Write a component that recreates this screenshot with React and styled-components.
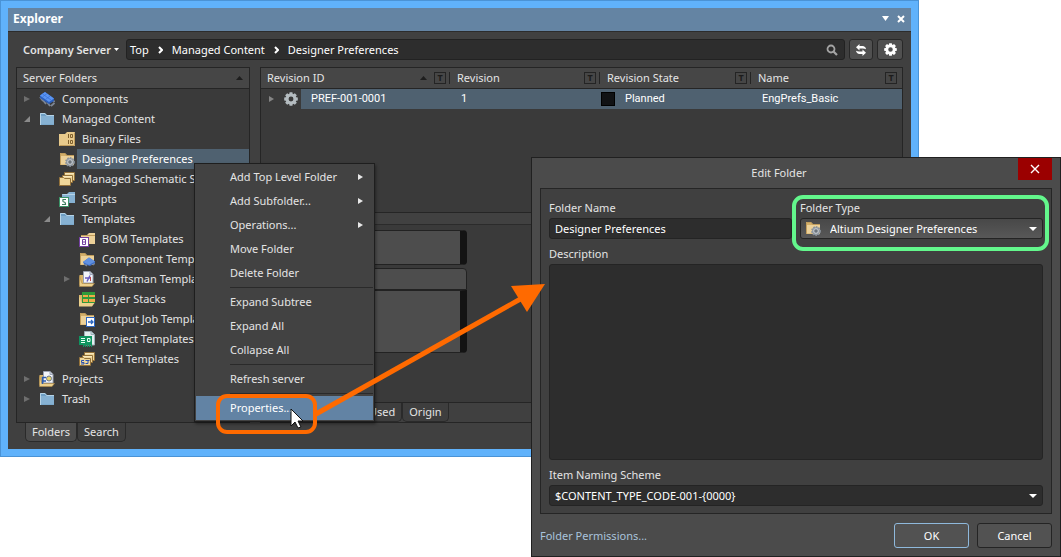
import React from 'react'
import styled, { createGlobalStyle, css } from 'styled-components'

const GlobalStyle = createGlobalStyle`
    *, *::before {
        box-sizing: border-box;
    }
    body {
        margin: 0;
        background: #fff;
        color: #e4e4e4;
        font: 11px/20px "Noto Sans", "Open Sans", sans-serif;
    }
    button, input, select, textarea {
        font: inherit;
        color: inherit;
        margin: 0;
    }
`

const Stage = styled.main`
    position: relative;
    min-height: 557px;
`

/* explorer window */
const Window = styled.section`
    margin-right: 142px;
    border: 8px solid #60b2fb;
    background: #404040;
    outline: 1px solid #4a93d6;
    outline-offset: -1px;
`
const TitleBar = styled.header`
    display: flex;
    align-items: center;
    height: 24px;
    padding: 0 6px 2px 5px;
    background: #6484a3;
    border-bottom: 1px solid #2c2c2c;
    color: #fff;
`
const Heading = styled.h1`
    flex: 1;
    margin: 0;
    font-size: 12px;
    font-weight: 700;
`
const BarButton = styled.button`
    display: flex;
    padding: 0;
    margin-left: 8px;
    border: 0;
    background: none;
`
const Toolbar = styled.div`
    display: flex;
    align-items: center;
    gap: 4px;
    padding: 7px 8px;
`
const ServerButton = styled.button`
    display: flex;
    align-items: center;
    justify-content: flex-end;
    gap: 3px;
    width: 106px;
    padding: 0 3px 0 0;
    border: 0;
    background: none;
    font-weight: 600;
    white-space: nowrap;
`
const Crumbs = styled.nav`
    display: flex;
    flex: 1;
    align-items: center;
    gap: 9px;
    height: 21px;
    padding: 0 6px 0 3px;
    border: 1px solid #222;
    border-radius: 3px;
    background: #2d2d2d;
    color: #fff;
    svg:last-child {
        margin-left: auto;
    }
`
const Crumb = styled.a`
    color: inherit;
    text-decoration: none;
`
const ToolButton = styled.button`
    display: flex;
    align-items: center;
    justify-content: center;
    width: ${p => p.$wide ? 26 : 24}px;
    height: 21px;
    padding: 0;
    border: 1px solid #282828;
    border-radius: 3px;
    background: #505050;
`
const Columns = styled.div`
    display: grid;
    grid-template-columns: 234px 1fr;
    gap: 10px;
    padding: 0 8px 7px;
`
const Panel = styled.div`
    height: 356px;
    border: 1px solid #252525;
    background: #3a3a3a;
`
const PanelHead = styled.div`
    display: flex;
    align-items: center;
    justify-content: space-between;
    height: 21px;
    padding: 0 6px;
    border-bottom: 1px solid #252525;
    background: #464646;
`
const TabRow = styled.div`
    display: flex;
    padding-left: 9px;
`
const Tab = styled.button`
    height: 19px;
    padding: 0 6px;
    border: 1px solid #2a2a2a;
    border-top: 0;
    border-radius: 0 0 5px 5px;
    background: ${p => p.$active ? '#4c4c4c' : '#3e3e3e'};
    line-height: 18px;
`
const Tree = styled.ul`
    margin: 0;
    padding: 0;
    list-style: none;
`
const TreeRow = styled.li`
    display: grid;
    grid-template-columns: 20px 20px 1fr;
    align-items: center;
    height: 20px;
    padding-left: ${p => p.$level * 20}px;
    svg {
        justify-self: center;
    }
`
const TreeLabel = styled.span`
    grid-column: 3;
    height: 20px;
    padding-left: 5px;
    overflow: hidden;
    white-space: nowrap;
    ${p => p.$selected && css`
        background: #4f6170;
        color: #fff;
    `}
`

/* revision list */
const Revisions = styled.div`
    height: 144px;
`
const Table = styled.table`
    width: 100%;
    table-layout: fixed;
    border-spacing: 0;
`
const Th = styled.th`
    width: ${p => p.$width || 'auto'};
    height: 21px;
    padding: 0 ${p => p.$last ? 5 : 1}px 0 6px;
    border-bottom: 1px solid #252525;
    background: #464646;
    font-weight: 400;
    text-align: left;
`
const ThInner = styled.div`
    display: flex;
    align-items: center;
    gap: 7px;
    height: 20px;
    span {
        flex: 1;
    }
`
const FilterMark = styled.button`
    width: 12px;
    height: 12px;
    padding: 0;
    border: 1px solid #242424;
    background: none;
    color: #1c1c1c;
    font-size: 9px;
    font-weight: 700;
    line-height: 10px;
`
const Divider = styled.i`
    width: 1px;
    height: 12px;
    margin-left: -4px;
    background: #242424;
`
const Td = styled.td`
    height: 20px;
    padding: 0 0 0 ${p => p.$pad || 0}px;
    background: #4f6170;
    color: #fff;
    font: 11px/20px Roboto, sans-serif;
`
const RevCell = styled.div`
    display: grid;
    grid-template-columns: 20px 20px 1fr;
    align-items: center;
    justify-items: center;
    background: #3a3a3a;
    span {
        justify-self: stretch;
        padding-left: 10px;
        background: #4f6170;
    }
`
const StateCell = styled.div`
    display: flex;
    align-items: center;
    gap: 10px;
    &::before {
        content: '';
        width: 14px;
        height: 14px;
        border: 1px solid #000;
        background: #111214;
    }
`
const Preview = styled.div`
    height: 190px;
    padding: 11px 4px 0;
    border-top: 1px solid #252525;
    background: linear-gradient(#414141 11px, #3a3a3a 11px);
`
const PreviewLine = styled.div`
    border-top: 1px solid #2b2b2b;
    margin-bottom: 5px;
`
const Card = styled.div`
    width: 202px;
    height: ${p => p.$height}px;
    margin-bottom: ${p => p.$gap || 0}px;
    border: 1px solid #222;
    border-right: ${p => p.$flat ? '1px' : '7px'} solid ${p => p.$flat ? '#222' : '#131313'};
    border-radius: ${p => p.$radius || '4px'};
    background: #4d4d4d;
`
const PreviewTabs = styled(TabRow)`
    height: 20px;
    padding-left: 101px;
    border-top: 1px solid #252525;
    background: #404040;
`

/* context menu */
const Menu = styled.div`
    position: absolute;
    top: 163px;
    left: 194px;
    width: 181px;
    padding: 1px;
    border: 1px solid #1e1e1e;
    background: #424242;
    box-shadow: 1px 2px 3px rgba(0, 0, 0, .4);
`
const MenuItem = styled.button`
    display: flex;
    align-items: center;
    justify-content: space-between;
    width: 100%;
    height: 24px;
    padding: 0 10px 0 34px;
    border: 0;
    background: ${p => p.$active ? '#6283a4' : 'none'};
    color: ${p => p.$active ? '#fff' : '#e4e4e4'};
`
const MenuLine = styled.hr`
    height: 1px;
    margin: 2px 0 2px 34px;
    border: 0;
    background: #2a2a2a;
`

/* dialog */
const Dialog = styled.section`
    position: absolute;
    top: 157px;
    left: 531px;
    right: 0;
    padding: 0 8px 8px;
    border: 1px solid #202020;
    background: #4b4b4b;
`
const DialogTitle = styled.header`
    display: flex;
    height: 30px;
    h2 {
        flex: 1;
        margin: 0;
        font-size: 11px;
        font-weight: 400;
        line-height: 30px;
        text-align: center;
    }
`
const CloseButton = styled.button`
    display: flex;
    align-items: center;
    justify-content: center;
    width: 34px;
    height: 22px;
    padding: 0;
    border: 0;
    background: #9b0000;
    color: #fff;
`
const Form = styled.form`
    display: grid;
    grid-template-columns: 1fr 1fr;
    column-gap: 8px;
    row-gap: 5px;
    padding: 9px 8px 7px;
    border: 1px solid #252525;
    background: #404040;
`
const Field = styled.div`
    display: flex;
    flex-direction: column;
    grid-column: ${p => p.$wide ? '1 / -1' : 'auto'};
    label {
        height: 20px;
    }
`
const box = css`
    width: 100%;
    height: 21px;
    padding: 0 5px;
    border: 1px solid #242424;
    border-radius: 3px;
    background: #2d2d2d;
    color: #fff;
    outline: 0;
`
const Input = styled.input`
    ${box}
`
const TextArea = styled.textarea`
    ${box}
    height: 196px;
    resize: none;
`
const SelectBox = styled.div`
    position: relative;
    display: flex;
    svg {
        position: absolute;
        pointer-events: none;
    }
    svg:last-child {
        top: 9px;
        right: 6px;
    }
    svg:not(:last-child) {
        top: 2px;
        left: 5px;
    }
`
const Select = styled.select`
    ${box}
    appearance: none;
    ${p => p.$icon && css`
        padding-left: 29px;
        background: linear-gradient(#484848, #585858);
    `}
`
const Footer = styled.footer`
    display: flex;
    align-items: center;
    gap: 8px;
    padding-top: 9px;
`
const Permissions = styled.a`
    flex: 1;
    color: #a9c3dc;
    text-decoration: none;
`
const DialogButton = styled.button`
    width: 75px;
    height: 25px;
    border: 1px solid ${p => p.$primary ? '#8fb9dc' : '#242424'};
    border-radius: 3px;
    background: #525252;
    color: #fff;
`

/* callouts drawn over both windows */
const Callout = styled.div`
    position: absolute;
    border: 4px solid ${p => p.$color};
    border-radius: 11px;
    pointer-events: none;
`
const OrangeCallout = styled(Callout)`
    top: 394px;
    left: 216px;
    width: 101px;
    height: 40px;
`
const GreenCallout = styled(Callout)`
    top: 195px;
    left: 792px;
    right: 12px;
    height: 56px;
`
const Overlay = styled.svg`
    position: absolute;
    top: 0;
    left: 0;
    pointer-events: none;
`

const Caret = ({ w = 7, h = 4, up, color = '#fff' }) => (
  <svg width={w} height={h} viewBox="0 0 8 4" preserveAspectRatio="none">
    <path d={up ? 'M0 4L4 0L8 4Z' : 'M0 0H8L4 4Z'} fill={color} />
  </svg>
)

const Twisty = ({ open }) => (
  <svg width="8" height="8" viewBox="0 0 8 8">
    <path d={open ? 'M7 1V7H1Z' : 'M1 1L7 4L1 7Z'} fill={open ? '#8a8a8a' : '#6e6e6e'} />
  </svg>
)

const Right = ({ color = '#e8e8e8' }) => (
  <svg width="5" height="6" viewBox="0 0 5 6"><path d="M0 0L5 3L0 6Z" fill={color} /></svg>
)

const Chevron = () => (
  <svg width="5" height="8" viewBox="0 0 5 8"><path d="M1 1L4 4L1 7" fill="none" stroke="#fff" strokeWidth="2" /></svg>
)

const teeth = [0, 45, 90, 135, 180, 225, 270, 315]

const Gear = ({ size = 14, color = '#fff' }) => (
  <svg width={size} height={size} viewBox="0 0 14 14">
    {teeth.map(a => (
      <path key={a} d="M5 3L5.600 0.200H8.400L9 3Z" fill={color} transform={`rotate(${a} 7 7)`} />
    ))}
    <circle cx="7" cy="7" r="3.900" fill="none" stroke={color} strokeWidth="2.900" />
  </svg>
)

const Folder = ({ fill = '#ecd199', edge = '#c09c5c', back = '#d2ae68' }) => (
  <g>
    <path d="M1 2H6L8 4H15V14H1Z" fill={back} />
    <path d="M2 5H15V13.500H2Z" fill={fill} />
    <path d="M1.500 14V2.500H6L7.500 4.500H15" fill="none" stroke={edge} />
  </g>
)

const BlueFolder = () => <Folder fill="#86b1d2" back="#6f9fc4" edge="#b6d3e6" />

const Stack = () => (
  <g stroke="#94723a" fill="#efd79a">
    <path d="M5.500 1.500H15.500V9.500H5.500Z" />
    <path d="M3.500 4.500H13.500V11.500H3.500Z" />
    <path d="M0.500 6.500H4.500L5.500 7.500H11.500V14.500H0.500Z" />
    <path d="M6 2.500H15M4 5.500H13" stroke="#f8e8bc" />
  </g>
)

const DocFolder = () => (
  <g>
    <path d="M0.500 4H5V14H0.500Z" fill="#d9b568" />
    <path d="M4.500 0.500H11L14 3.500V12H4.500Z" fill="#f4f6fa" stroke="#9ba3b3" />
    <path d="M11 0.500V3.500H14" fill="#c8d0de" stroke="#9ba3b3" />
    <path d="M0.500 5L3 12.500H15.500L13 15.500H0.500Z" fill="#ecd08c" stroke="#b08c4a" strokeWidth="0.600" />
  </g>
)

const drawings = {
  chip: (
    <g>
      <path d="M1 6L4 10M3 8L7 13M12 15L15.500 12M8 11L11 15M14 9L15.500 11" stroke="#7d8694" strokeWidth="1.800" />
      <path d="M1 4.500L6 1L15 7.500V10L10 13L1 7Z" fill="#2b5fbd" />
      <path d="M6 1L15 7.500L10 11L1 4.500Z" fill="#5b95f2" />
      <path d="M3.500 3L12 9M8 2.500L3.500 6M11 5L6.500 8.500" stroke="#3a72d8" strokeWidth="0.800" />
    </g>
  ),
  blue: <BlueFolder />,
  binary: (
    <g>
      <path d="M0 3H6L8 1H16V15H0Z" fill="#e8ca8c" />
      <path d="M0.500 14.500H15.500V1.500" fill="none" stroke="#c09c5c" />
      <path d="M9.500 3V7M9.500 9V13" stroke="#80602c" />
      <path d="M11.500 3.500H13.500V6.500H11.500ZM11.500 9.500H13.500V12.500H11.500Z" fill="none" stroke="#80602c" />
    </g>
  ),
  prefs: (
    <g>
      <Folder />
      <circle cx="11" cy="11" r="4" fill="#9aa2aa" stroke="#8b939b" strokeDasharray="1.600 1" strokeWidth="1.800" />
      <circle cx="11" cy="11" r="2.300" fill="#6c747c" stroke="#c9ced3" />
    </g>
  ),
  stack: <Stack />,
  script: (
    <g>
      <path d="M3 3H8L10 1H16V12H3Z" fill="#86b1d2" />
      <path d="M3.500 3.500H16" stroke="#b6d3e6" />
      <rect x="0.500" y="6.500" width="9" height="9" fill="#fff" stroke="#3c9468" />
      <path d="M7 8.500H4Q3.500 11 5 11Q6.500 11 6.500 13.500H3" fill="none" stroke="#3c7c5c" strokeWidth="1.200" />
    </g>
  ),
  bom: (
    <g>
      <path d="M2 4H8L10 2H16V13H2Z" fill="#ecd199" />
      <path d="M2 4.500H16" stroke="#c09c5c" />
      <rect x="0.500" y="6.500" width="9" height="9" fill="#fff" stroke="#7440a0" />
      <path d="M3.500 8.500H6.500V13.500H3.500ZM3.500 11H6.500" fill="none" stroke="#7440a0" />
    </g>
  ),
  component: (
    <g>
      <Folder />
      <path d="M5 13L8 15M14 14L16 12" stroke="#7d8694" strokeWidth="1.500" />
      <path d="M4 11L10 6.500L16 10.500V12L11 15L5 13Z" fill="#3c6cc4" />
      <path d="M4 11L10 6.500L16 10.500L10 14Z" fill="#6090e0" />
    </g>
  ),
  draft: (
    <g>
      <DocFolder />
      <path d="M6 7H12M11 4.500L8 10.500" stroke="#6a5cc0" strokeWidth="1.400" />
      <path d="M11.500 6V10" stroke="#c04848" />
    </g>
  ),
  layers: (
    <g>
      <path d="M0 4H4V15H0Z" fill="#d9b568" />
      <rect x="3" y="1" width="13" height="11" fill="#2f9a3a" />
      <path d="M4 4H9V6H4ZM10 4H16V6H10ZM4 8H9V11H4ZM10 8H16V11H10Z" fill="#f0aa48" />
      <path d="M0 5L3 12H15.500L13 15.500H0Z" fill="#ecd08c" />
    </g>
  ),
  output: (
    <g>
      <Folder />
      <rect x="7.500" y="6.500" width="8" height="9" fill="#fff" stroke="#2c66c0" />
      <path d="M9 11H14M12 9L14 11L12 13" fill="none" stroke="#2c66c0" strokeWidth="1.300" />
    </g>
  ),
  project: (
    <g>
      <path d="M5.500 0.500H12L15.500 3.500V14H5.500Z" fill="#e4eef0" stroke="#9cb0b8" />
      <path d="M12 0.500V3.500H15" fill="#c8d8de" stroke="#9cb0b8" />
      <rect y="5" width="13" height="9" fill="#0f9460" />
      <path d="M2 7.500H6M2 9.500H6M2 11.500H6" stroke="#e8fff4" />
      <path d="M8.500 7.500H11V10.500H8.500Z" fill="none" stroke="#e8fff4" />
      <path d="M4 15H13" stroke="#0f9460" strokeWidth="2" strokeDasharray="1 1" />
    </g>
  ),
  sch: (
    <g>
      <Stack />
      <path d="M5 9.500H2.500V11.500H5V13H2M6.500 9.500H10.500M6.500 12.500H9V10" fill="none" stroke="#2850b0" />
    </g>
  ),
  projects: (
    <g>
      <DocFolder />
      <path d="M3.500 13V6.500H7M3.500 10H7" fill="none" stroke="#2c5cae" strokeWidth="1.500" />
      <circle cx="10" cy="7.500" r="2.500" fill="#e8d46c" stroke="#6c7890" />
    </g>
  ),
}

const Icon = ({ name }) => (
  <svg width="16" height="16" viewBox="0 0 16 16">{drawings[name]}</svg>
)

const tree = [
  { level: 0, icon: 'chip', label: 'Components', twisty: 'closed' },
  { level: 0, icon: 'blue', label: 'Managed Content', twisty: 'open' },
  { level: 1, icon: 'binary', label: 'Binary Files' },
  { level: 1, icon: 'prefs', label: 'Designer Preferences', selected: true },
  { level: 1, icon: 'stack', label: 'Managed Schematic Sheets' },
  { level: 1, icon: 'script', label: 'Scripts' },
  { level: 1, icon: 'blue', label: 'Templates', twisty: 'open' },
  { level: 2, icon: 'bom', label: 'BOM Templates' },
  { level: 2, icon: 'component', label: 'Component Templates' },
  { level: 2, icon: 'draft', label: 'Draftsman Templates', twisty: 'closed' },
  { level: 2, icon: 'layers', label: 'Layer Stacks' },
  { level: 2, icon: 'output', label: 'Output Job Templates' },
  { level: 2, icon: 'project', label: 'Project Templates' },
  { level: 2, icon: 'sch', label: 'SCH Templates' },
  { level: 0, icon: 'projects', label: 'Projects', twisty: 'closed' },
  { level: 0, icon: 'blue', label: 'Trash', twisty: 'closed' },
]

const columns = [
  { label: 'Revision ID', width: '190px', sorted: true },
  { label: 'Revision', width: '150px' },
  { label: 'Revision State', width: '151px' },
  { label: 'Name', last: true },
]

const menu = [
  { label: 'Add Top Level Folder', sub: true },
  { label: 'Add Subfolder...', sub: true },
  { label: 'Operations...', sub: true },
  { label: 'Move Folder' },
  { label: 'Delete Folder' },
  null,
  { label: 'Expand Subtree' },
  { label: 'Expand All' },
  { label: 'Collapse All' },
  null,
  { label: 'Refresh server' },
  null,
  { label: 'Properties...', active: true },
]

const Explorer = () => (
  <Window>
    <TitleBar>
      <Heading>Explorer</Heading>
      <BarButton aria-label="Window menu"><Caret h={5} /></BarButton>
      <BarButton aria-label="Close panel">
        <svg width="8" height="8" viewBox="0 0 8 8"><path d="M1 1L7 7M7 1L1 7" stroke="#fff" strokeWidth="2" /></svg>
      </BarButton>
    </TitleBar>
    <Toolbar>
      <ServerButton>Company Server <Caret w={5} h={3} /></ServerButton>
      <Crumbs>
        <Crumb href="#top">Top</Crumb>
        <Chevron />
        <Crumb href="#content">Managed Content</Crumb>
        <Chevron />
        <Crumb href="#prefs">Designer Preferences</Crumb>
        <svg width="12" height="12" viewBox="0 0 12 12">
          <circle cx="5" cy="5" r="3.500" fill="none" stroke="#a4a4a4" strokeWidth="1.800" />
          <path d="M7.500 7.500L11 11" stroke="#a4a4a4" strokeWidth="2.200" />
        </svg>
      </Crumbs>
      <ToolButton aria-label="Refresh">
        <svg width="12" height="12" viewBox="0 0 12 12">
          <path d="M1 3.200L4.500 0V2H7.500Q10.500 2.200 11 5.200Q9.500 4.300 7.500 4.400H4.500V6.400Z" fill="#fff" />
          <path d="M11 8.800L7.500 5.600V7.600H4.500Q2.500 7.700 1 6.800Q1.500 9.800 4.500 10H7.500V12Z" fill="#fff" />
        </svg>
      </ToolButton>
      <ToolButton $wide aria-label="Settings"><Gear size={13} /></ToolButton>
    </Toolbar>
    <Columns>
      <div>
        <Panel>
          <PanelHead>Server Folders <Caret up color="#1e1e1e" /></PanelHead>
          <Tree>
            {tree.map(n => (
              <TreeRow key={n.label} $level={n.level}>
                {n.twisty ? <Twisty open={n.twisty === 'open'} /> : <i />}
                <Icon name={n.icon} />
                <TreeLabel $selected={n.selected}>{n.label}</TreeLabel>
              </TreeRow>
            ))}
          </Tree>
        </Panel>
        <TabRow>
          <Tab $active>Folders</Tab>
          <Tab>Search</Tab>
        </TabRow>
      </div>
      <Panel>
        <Revisions>
          <Table>
            <thead>
              <tr>
                {columns.map(c => (
                  <Th key={c.label} $width={c.width} $last={c.last}>
                    <ThInner>
                      <span>{c.label}</span>
                      {c.sorted && <Caret up color="#1e1e1e" />}
                      <FilterMark aria-label={'Filter ' + c.label}>T</FilterMark>
                      {!c.last && <Divider />}
                    </ThInner>
                  </Th>
                ))}
              </tr>
            </thead>
            <tbody>
              <tr>
                <Td>
                  <RevCell>
                    <Right color="#858585" />
                    <Gear color="#b4bcc0" />
                    <span>PREF-001-0001</span>
                  </RevCell>
                </Td>
                <Td $pad={10}>1</Td>
                <Td><StateCell>Planned</StateCell></Td>
                <Td $pad={10}>EngPrefs_Basic</Td>
              </tr>
            </tbody>
          </Table>
        </Revisions>
        <Preview>
          <PreviewLine />
          <Card $height={35} $gap={3} />
          <Card $height={22} $flat $radius="4px 4px 0 0" />
          <Card $height={63} $radius="0 0 4px 4px" />
        </Preview>
        <PreviewTabs>
          <Tab>Used</Tab>
          <Tab>Origin</Tab>
        </PreviewTabs>
      </Panel>
    </Columns>
  </Window>
)

const ContextMenu = () => (
  <Menu>
    {menu.map((m, i) => m ? (
      <MenuItem key={m.label} $active={m.active}>
        {m.label}
        {m.sub && <Right />}
      </MenuItem>
    ) : <MenuLine key={i} />)}
  </Menu>
)

const EditFolder = () => (
  <Dialog>
    <DialogTitle>
      <h2>Edit Folder</h2>
      <CloseButton aria-label="Close">
        <svg width="10" height="10" viewBox="0 0 10 10"><path d="M1 1L9 9M9 1L1 9" stroke="#fff" strokeWidth="1.400" /></svg>
      </CloseButton>
    </DialogTitle>
    <Form>
      <Field>
        <label htmlFor="name">Folder Name</label>
        <Input id="name" defaultValue="Designer Preferences" />
      </Field>
      <Field>
        <label htmlFor="type">Folder Type</label>
        <SelectBox>
          <Select id="type" $icon><option>Altium Designer Preferences</option></Select>
          <Icon name="prefs" />
          <Caret w={8} />
        </SelectBox>
      </Field>
      <Field $wide>
        <label htmlFor="desc">Description</label>
        <TextArea id="desc" />
      </Field>
      <Field $wide>
        <label htmlFor="scheme">Item Naming Scheme</label>
        <SelectBox>
          <Select id="scheme"><option>{'$CONTENT_TYPE_CODE-001-{0000}'}</option></Select>
          <Caret w={8} />
        </SelectBox>
      </Field>
    </Form>
    <Footer>
      <Permissions href="#permissions">Folder Permissions...</Permissions>
      <DialogButton $primary>OK</DialogButton>
      <DialogButton>Cancel</DialogButton>
    </Footer>
  </Dialog>
)

const App = () => {
  return (
    <Stage>
      <GlobalStyle />
      <Explorer />
      <ContextMenu />
      <EditFolder />
      <OrangeCallout $color="#ff6a00" />
      <GreenCallout $color="#63f78c" />
      <Overlay width="560" height="440" viewBox="0 0 560 440">
        <path d="M316 414L524 297" stroke="#ff6a00" strokeWidth="5" />
        <path d="M545 284L511 286L527 312Z" fill="#ff6a00" />
        <path d="M291 409V426L295 422L298 428L301 427L298 421H303Z" fill="#fff" stroke="#111" strokeWidth="1" />
      </Overlay>
    </Stage>
  )
}

export default App
